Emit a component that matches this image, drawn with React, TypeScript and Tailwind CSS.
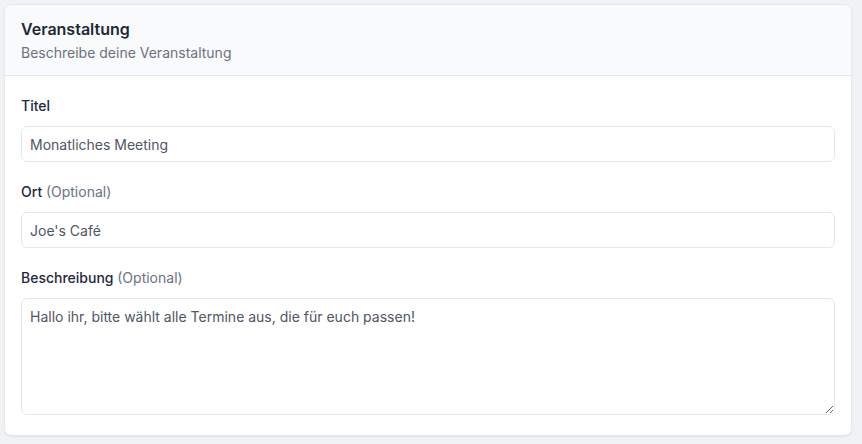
import React from "react";

const fieldClass =
  "block w-full rounded-md border border-gray-200 bg-white px-2 text-sm text-[#4f5664] outline-none";

export default function App() {
  return (
    <div
      className="min-h-[444px] w-full bg-[#f1f2f4] pt-[5px] pl-[5px]"
      style={{ fontFamily: "Inter, 'Noto Sans', sans-serif" }}
    >
      <div className="w-[846px] overflow-hidden rounded-md bg-white shadow-sm ring-1 ring-gray-200">
        {/* Header */}
        <div className="border-b border-gray-200 bg-gray-50 px-4 pt-3 pb-3">
          <h2 className="text-base leading-6 font-semibold text-gray-800">Veranstaltung</h2>
          <p className="mt-0.5 text-sm leading-5 text-gray-500">Beschreibe deine Veranstaltung</p>
        </div>

        {/* Form */}
        <div className="flex flex-col gap-5 px-4 pt-5 pb-5">
          <div>
            <label className="block text-sm leading-5 font-medium text-gray-800">Titel</label>
            <input className={`${fieldClass} mt-2.5 h-9`} defaultValue="Monatliches Meeting" />
          </div>
          <div>
            <label className="block text-sm leading-5 font-medium text-gray-800">
              Ort <span className="font-normal text-gray-500">(Optional)</span>
            </label>
            <input className={`${fieldClass} mt-2.5 h-9`} defaultValue="Joe's Café" />
          </div>
          <div>
            <label className="block text-sm leading-5 font-medium text-gray-800">
              Beschreibung <span className="font-normal text-gray-500">(Optional)</span>
            </label>
            <textarea
              className={`${fieldClass} mt-2.5 h-[117px] py-2 leading-5`}
              defaultValue="Hallo ihr, bitte wählt alle Termine aus, die für euch passen!"
            />
          </div>
        </div>
      </div>
    </div>
  );
}
